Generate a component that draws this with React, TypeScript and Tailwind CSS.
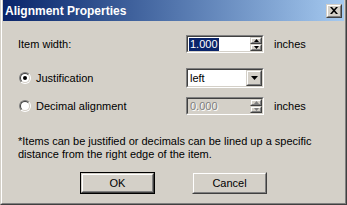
import React from "react";

function Sunken({ className = "", inner = "", children }: { className?: string; inner?: string; children?: React.ReactNode }) {
  return (
    <div className={`border border-t-[#808080] border-l-[#808080] border-b-white border-r-white ${className}`}>
      <div className={`h-full border border-t-[#404040] border-l-[#404040] border-b-[#d4d0c8] border-r-[#d4d0c8] ${inner}`}>{children}</div>
    </div>
  );
}

function Raised({ className = "", children }: { className?: string; children?: React.ReactNode }) {
  return (
    <div className={`border border-t-[#d4d0c8] border-l-[#d4d0c8] border-b-[#404040] border-r-[#404040] bg-[#d4d0c8] ${className}`}>
      <div className="h-full w-full border border-t-white border-l-white border-b-[#808080] border-r-[#808080] flex items-center justify-center">
        {children}
      </div>
    </div>
  );
}

function Arrow({ up, color = "#000" }: { up?: boolean; color?: string }) {
  return (
    <svg width="5" height="3" viewBox="0 0 5 3">
      <path d={up ? "M2.5 0 L5 3 L0 3 Z" : "M0 0 L5 0 L2.5 3 Z"} fill={color} />
    </svg>
  );
}

function Spinner({ disabled }: { disabled?: boolean }) {
  const c = disabled ? "#808080" : "#000";
  return (
    <div className="flex flex-col w-[12px] h-full">
      <Raised className="flex-1">
        <Arrow up color={c} />
      </Raised>
      <Raised className="flex-1">
        <Arrow color={c} />
      </Raised>
    </div>
  );
}

function Radio({ checked }: { checked?: boolean }) {
  return (
    <div className="w-[12px] h-[12px] rounded-full border border-t-[#808080] border-l-[#808080] border-b-white border-r-white">
      <div className="w-full h-full rounded-full border border-t-[#404040] border-l-[#404040] border-b-[#d4d0c8] border-r-[#d4d0c8] bg-white flex items-center justify-center">
        {checked && <div className="w-[4px] h-[4px] rounded-full bg-black" />}
      </div>
    </div>
  );
}

export default function App() {
  return (
    <div
      className="w-[347px] h-[205px] bg-[#d4d0c8] text-[11px] text-black border-l border-b border-r border-l-[#d4d0c8] border-b-[#404040] border-r-[#404040]"
      style={{ fontFamily: '"Liberation Sans", Arial, sans-serif' }}
    >
      <div className="h-full border-l border-b border-r border-l-white border-b-[#808080] border-r-[#808080] pl-px pr-px pb-px flex flex-col">
        {/* title bar */}
        <div className="h-[21px] bg-gradient-to-r from-[#0a246a] to-[#a6caf0] flex items-center justify-between pl-[2px] pr-[2px]">
          <span className="text-white font-bold text-[12px] leading-none">
            Alignment Properties
          </span>
          <Raised className="w-[16px] h-[14px]">
            <svg width="8" height="7" viewBox="0 0 8 7">
              <path d="M0 0 L2 0 L4 2.2 L6 0 L8 0 L5 3.5 L8 7 L6 7 L4 4.8 L2 7 L0 7 L3 3.5 Z" fill="#000" />
            </svg>
          </Raised>
        </div>

        {/* body */}
        <div className="flex-1 pt-[14px] pl-[15px] flex flex-col">
          <div className="flex items-center h-[18px]">
            <span className="w-[168px]">Item width:</span>
            <Sunken className="w-[78px] h-[18px]" inner="bg-white flex items-stretch">
              <div className="flex-1 flex items-center pl-px">
                <span className="bg-[#0a246a] text-white leading-[13px] px-px">1.000</span>
              </div>
              <Spinner />
            </Sunken>
            <span className="ml-[10px]">inches</span>
          </div>

          <div className="flex items-center h-[20px] mt-[15px]">
            <div className="w-[168px] flex items-center">
              <div className="ml-px"><Radio checked /></div>
              <span className="ml-[5px]">Justification</span>
            </div>
            <Sunken className="w-[78px] h-[20px]" inner="bg-white flex items-stretch">
              <div className="flex-1 flex items-center pl-[2px]">left</div>
              <Raised className="w-[16px] h-full">
                <svg width="7" height="4" viewBox="0 0 7 4">
                  <path d="M0 0 L7 0 L3.5 4 Z" fill="#000" />
                </svg>
              </Raised>
            </Sunken>
          </div>

          <div className="flex items-center h-[18px] mt-[9px]">
            <div className="w-[168px] flex items-center">
              <div className="ml-px"><Radio /></div>
              <span className="ml-[5px]">Decimal alignment</span>
            </div>
            <Sunken className="w-[78px] h-[18px]" inner="bg-[#d4d0c8] flex items-stretch">
              <div className="flex-1 flex items-center pl-[2px] text-[#808080]" style={{ textShadow: "1px 1px 0 #fff" }}>
                0.000
              </div>
              <Spinner disabled />
            </Sunken>
            <span className="ml-[10px]">inches</span>
          </div>

          <p className="mt-[20px] leading-[13px] w-[300px]">
            *Items can be justified or decimals can be lined up a specific distance from the right edge of the item.
          </p>

          <div className="flex mt-[11px] pl-[62px] gap-[37px]">
            <div className="w-[75px] h-[22px] border border-black">
              <Raised className="w-full h-full">OK</Raised>
            </div>
            <Raised className="w-[75px] h-[22px]">Cancel</Raised>
          </div>
        </div>
      </div>
    </div>
  );
}
